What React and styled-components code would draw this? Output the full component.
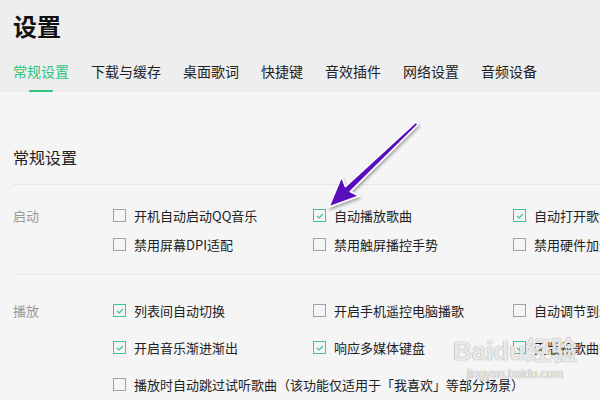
import React from "react";
import styled, { createGlobalStyle } from "styled-components";

const Global = createGlobalStyle`
  html, body { margin: 0; padding: 0; }
  body {
    width: 600px; height: 400px; overflow: hidden;
    background: #f5f5f5;
    font-family: "Noto Sans CJK SC", "Noto Sans", sans-serif;
    color: #333;
  }
`;

const Page = styled.div`
  position: relative;
  width: 600px;
  height: 400px;
  overflow: hidden;
  background: #f5f5f5;
`;

const Header = styled.header`
  background: #eeeeee;
  padding-left: 13px;
  height: 92px;
  box-sizing: border-box;
`;

const Title = styled.h1`
  margin: 0;
  padding-top: 10px;
  font-size: 24px;
  line-height: 32px;
  font-weight: 700;
  color: #111;
`;

const Tabs = styled.nav`
  display: flex;
  gap: 22px;
`;

const Tab = styled.div`
  display: flex;
  flex-direction: column;
  align-items: center;
  padding-top: 19px;
  font-size: 14px;
  line-height: 20px;
  color: ${(p) => (p.$active ? "#31c27c" : "#222")};
`;

const Underline = styled.span`
  margin-top: 9px;
  width: 24px;
  height: 2px;
  border-radius: 1px;
  background: ${(p) => (p.$show ? "#31c27c" : "transparent")};
`;

const Content = styled.main`
  padding: 53px 0 0 13px;
`;

const SectionTitle = styled.h2`
  margin: 0;
  font-size: 16px;
  line-height: 24px;
  font-weight: 400;
  color: #222;
`;

const Divider = styled.div`
  margin-top: ${(p) => p.$top}px;
  height: 1px;
  background: #e6e6e6;
`;

const Group = styled.section`
  display: grid;
  grid-template-columns: 100px 200px 200px 200px;
  row-gap: ${(p) => p.$gap}px;
  padding: ${(p) => p.$pt}px 0 ${(p) => p.$pb}px;
`;

const Label = styled.div`
  grid-column: 1;
  grid-row: 1 / span ${(p) => p.$rows};
  font-size: 13px;
  line-height: 20px;
  color: #999;
`;

const Option = styled.label`
  display: flex;
  align-items: center;
  gap: 8px;
  font-size: 13px;
  line-height: 20px;
  color: #222;
  white-space: nowrap;
  grid-column: ${(p) => (p.$wide ? "2 / span 3" : "auto")};
`;

const Box = styled.span`
  flex: none;
  width: 11px;
  height: 11px;
  border: 1px solid ${(p) => (p.$checked ? "#3cc79a" : "#a2a2a2")};
  display: flex;
  align-items: center;
  justify-content: center;
  margin-top: -1px;
`;

const Check = () => (
  <svg width="8" height="6" viewBox="0 0 8 6">
    <path d="M1 3 L3.2 5 L7 1" fill="none" stroke="#3cc79a" strokeWidth="1.2" />
  </svg>
);

const Overlay = styled.svg`
  position: absolute;
  left: 0;
  top: 0;
  pointer-events: none;
`;

const Watermark = styled.div`
  position: absolute;
  left: 460px;
  top: 334px;
  width: 110px;
  display: flex;
  flex-direction: column;
  align-items: center;
  white-space: nowrap;
  color: rgba(255, 255, 255, 0.8);
  text-shadow: 0 0 1px rgba(140, 140, 140, 0.7), 0 0 1px rgba(140, 140, 140, 0.7);
  pointer-events: none;
`;

const WmMain = styled.span`
  font-family: "Liberation Sans", "Noto Sans CJK SC", sans-serif;
  font-size: 26px;
  font-weight: 700;
  line-height: 34px;
`;

const WmSub = styled.span`
  font-family: "Liberation Sans", sans-serif;
  font-size: 12px;
  line-height: 12px;
`;

const tabs = ["常规设置", "下载与缓存", "桌面歌词", "快捷键", "音效插件", "网络设置", "音频设备"];

const Opt = ({ checked, wide, children }) => (
  <Option $wide={wide}>
    <Box $checked={checked}>{checked && <Check />}</Box>
    {children}
  </Option>
);

export default function App() {
  return (
    <Page>
      <Global />
      <Header>
        <Title>设置</Title>
        <Tabs>
          {tabs.map((t, i) => (
            <Tab key={t} $active={i === 0}>
              {t}
              <Underline $show={i === 0} />
            </Tab>
          ))}
        </Tabs>
      </Header>
      <Content>
        <SectionTitle>常规设置</SectionTitle>
        <Divider $top={15} />
        <Group $gap={9} $pt={21} $pb={19}>
          <Label $rows={2}>启动</Label>
          <Opt>开机自动启动QQ音乐</Opt>
          <Opt checked>自动播放歌曲</Opt>
          <Opt checked>自动打开歌词</Opt>
          <Opt>禁用屏幕DPI适配</Opt>
          <Opt>禁用触屏播控手势</Opt>
          <Opt>禁用硬件加速</Opt>
        </Group>
        <Divider $top={0} />
        <Group $gap={17} $pt={26} $pb={0}>
          <Label $rows={3}>播放</Label>
          <Opt checked>列表间自动切换</Opt>
          <Opt>开启手机遥控电脑播歌</Opt>
          <Opt>自动调节到最佳音量</Opt>
          <Opt checked>开启音乐渐进渐出</Opt>
          <Opt checked>响应多媒体键盘</Opt>
          <Opt checked>无版权歌曲替换</Opt>
          <Opt wide>播放时自动跳过试听歌曲（该功能仅适用于「我喜欢」等部分场景）</Opt>
        </Group>
      </Content>
      <Watermark>
        <WmMain>Baidu经验</WmMain>
        <WmSub>jingyan.baidu.com</WmSub>
      </Watermark>
      <Overlay width="600" height="400" viewBox="0 0 600 400">
        <defs>
          <filter id="sh" x="-20%" y="-20%" width="140%" height="140%">
            <feDropShadow dx="1" dy="2" stdDeviation="1.5" floodColor="#000" floodOpacity="0.35" />
          </filter>
        </defs>
        <polygon
          points="416,122 418,124.5 350.2,191.6 359,196 329,207 341.5,177 345.4,186.6"
          fill="#5a0dbd"
          stroke="#fff"
          strokeWidth="1.5"
          strokeLinejoin="round"
          filter="url(#sh)"
        />
      </Overlay>
    </Page>
  );
}
